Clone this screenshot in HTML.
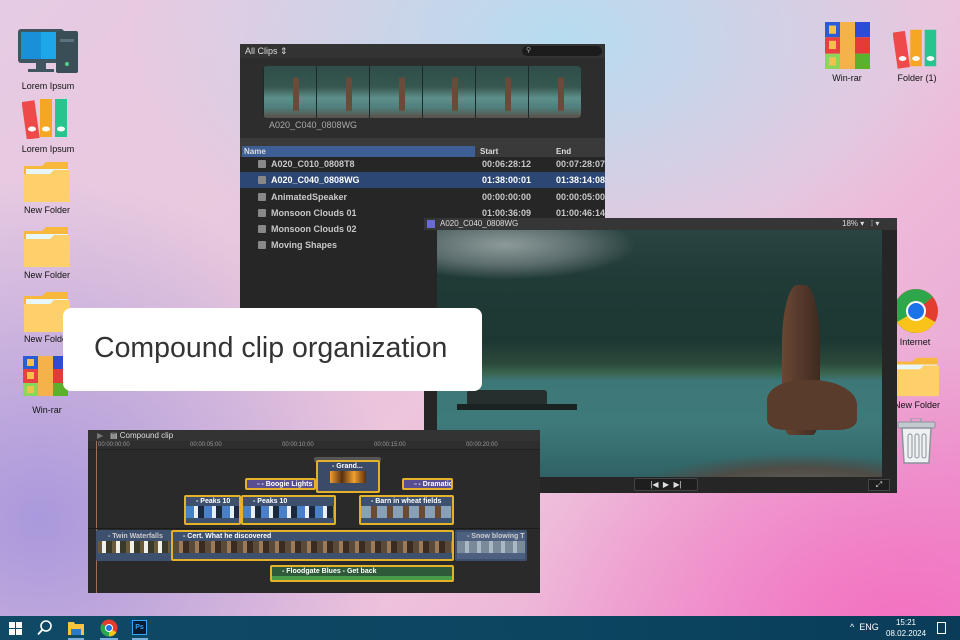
<!DOCTYPE html>
<html><head><meta charset="utf-8"><style>
*{margin:0;padding:0;box-sizing:border-box}
body{width:960px;height:640px;overflow:hidden;position:relative;font-family:"Liberation Sans",sans-serif;
background:
radial-gradient(ellipse 420px 260px at 560px 40px,#b6dcf0 0%,rgba(182,220,240,0) 100%),
radial-gradient(ellipse 380px 300px at 900px 640px,#f46fc0 0%,rgba(244,111,192,0) 100%),
radial-gradient(ellipse 360px 340px at 40px 520px,#a998dc 0%,rgba(169,152,220,0) 100%),
linear-gradient(135deg,#e6cbe4 0%,#e9c8dc 35%,#efc3dc 60%,#e99ad0 100%);}
.abs{position:absolute}
.lbl{position:absolute;font-size:9px;color:#111;text-align:center;width:80px}
.win{position:absolute;background:#2b2b2b}
.row{position:absolute;left:0;width:365px;height:16px;font-size:9px;font-weight:bold;color:#c8c8c8;line-height:16px}
.row span{position:absolute}
.ic{position:absolute;left:18px;top:4px;width:8px;height:8px;background:#888;border-radius:1px}
.clip{position:absolute;border:2px solid #e3b22a;border-radius:2px;background:#3d506e;font-size:7px;color:#fff;font-weight:bold;padding-left:10px;line-height:9px;overflow:hidden;white-space:nowrap}
.thumbs{position:absolute;left:0;right:0;top:9px;height:12px}
</style></head><body>

<svg class="abs" style="left:16px;top:27px" width="64" height="50" viewBox="0 0 64 50">
<rect x="2" y="2" width="46" height="34" rx="3" fill="#3f5560"/><rect x="5" y="5" width="40" height="27" fill="#1da7e8"/><rect x="5" y="5" width="20" height="27" fill="#1a90d8"/>
<rect x="20" y="36" width="10" height="6" fill="#3f5560"/><rect x="12" y="42" width="26" height="3" fill="#3f5560"/>
<rect x="40" y="4" width="22" height="42" rx="2" fill="#3a4e58"/><rect x="44" y="12" width="14" height="3" fill="#5b7380"/><circle cx="51" cy="37" r="2" fill="#4fd08a"/></svg>
<div class="lbl" style="left:8px;top:81px">Lorem Ipsum</div>
<svg class="abs" style="left:22px;top:97px" width="50" height="42" viewBox="0 0 50 42">
<rect x="2" y="4" width="13" height="38" fill="#ef4a4a" transform="rotate(-8 8 22)"/><rect x="18" y="2" width="12" height="38" fill="#f5a623"/><rect x="33" y="2" width="12" height="38" fill="#27c48d"/>
<ellipse cx="10" cy="32" rx="4" ry="2.5" fill="#fff"/><ellipse cx="24" cy="32" rx="4" ry="2.5" fill="#fff"/><ellipse cx="39" cy="32" rx="4" ry="2.5" fill="#fff"/></svg>
<div class="lbl" style="left:8px;top:144px">Lorem Ipsum</div>
<svg class="abs" style="left:24px;top:160px" width="46" height="42" viewBox="0 0 46 42"><path d="M0 6h18l4-4h22v38H0z" fill="#f8b83c"/><rect x="2" y="9" width="42" height="6" fill="#e6f6fb"/><path d="M0 14h26l4-4h16v32H0z" fill="#fdd06a"/></svg>
<div class="lbl" style="left:7px;top:205px">New Folder</div>
<svg class="abs" style="left:24px;top:225px" width="46" height="42" viewBox="0 0 46 42"><path d="M0 6h18l4-4h22v38H0z" fill="#f8b83c"/><rect x="2" y="9" width="42" height="6" fill="#e6f6fb"/><path d="M0 14h26l4-4h16v32H0z" fill="#fdd06a"/></svg>
<div class="lbl" style="left:7px;top:270px">New Folder</div>
<svg class="abs" style="left:24px;top:290px" width="46" height="42" viewBox="0 0 46 42"><path d="M0 6h18l4-4h22v38H0z" fill="#f8b83c"/><rect x="2" y="9" width="42" height="6" fill="#e6f6fb"/><path d="M0 14h26l4-4h16v32H0z" fill="#fdd06a"/></svg>
<div class="lbl" style="left:7px;top:334px">New Folder</div>
<svg class="abs" style="left:23px;top:356px" width="45" height="40" viewBox="0 0 45 40"><rect width="15" height="13" fill="#2d5bd6"/><rect x="30" width="15" height="13" fill="#2d4bd6"/><rect y="13" width="15" height="14" fill="#e84040"/><rect x="30" y="13" width="15" height="14" fill="#e43a3a"/><rect y="27" width="15" height="13" fill="#8fd45a"/><rect x="30" y="27" width="15" height="13" fill="#5cb02c"/><rect x="15" width="15" height="40" fill="#f5b24a"/><rect x="4" y="3" width="7" height="7" fill="#f5c04a"/><rect x="4" y="16" width="7" height="7" fill="#f5c04a"/><rect x="4" y="30" width="7" height="7" fill="#f5c04a"/></svg>
<div class="lbl" style="left:7px;top:405px">Win-rar</div>

<svg class="abs" style="left:825px;top:22px" width="45" height="47" viewBox="0 0 45 40" preserveAspectRatio="none"><rect width="15" height="13" fill="#2d5bd6"/><rect x="30" width="15" height="13" fill="#2d4bd6"/><rect y="13" width="15" height="14" fill="#e84040"/><rect x="30" y="13" width="15" height="14" fill="#e43a3a"/><rect y="27" width="15" height="13" fill="#8fd45a"/><rect x="30" y="27" width="15" height="13" fill="#5cb02c"/><rect x="15" width="15" height="40" fill="#f5b24a"/><rect x="4" y="3" width="7" height="7" fill="#f5c04a"/><rect x="4" y="16" width="7" height="7" fill="#f5c04a"/><rect x="4" y="30" width="7" height="7" fill="#f5c04a"/></svg>
<div class="lbl" style="left:807px;top:73px">Win-rar</div>
<svg class="abs" style="left:893px;top:27px" width="48" height="42" viewBox="0 0 50 42">
<rect x="2" y="4" width="13" height="38" fill="#ef4a4a" transform="rotate(-8 8 22)"/><rect x="18" y="2" width="12" height="38" fill="#f5a623"/><rect x="33" y="2" width="12" height="38" fill="#27c48d"/>
<ellipse cx="10" cy="32" rx="4" ry="2.5" fill="#fff"/><ellipse cx="24" cy="32" rx="4" ry="2.5" fill="#fff"/><ellipse cx="39" cy="32" rx="4" ry="2.5" fill="#fff"/></svg>
<div class="lbl" style="left:877px;top:73px">Folder (1)</div>
<svg class="abs" style="left:893px;top:288px" width="46" height="46" viewBox="-23 -23 46 46">
<circle r="22" fill="#e33d30"/><path d="M0 0L-19 -11A22 22 0 0 1 19 -11Z" fill="#2ea64c" transform="rotate(-10)"/><path d="M0 0L-19 -11A22 22 0 0 0 0 22Z" fill="#2ea64c"/><path d="M0 0L0 22A22 22 0 0 0 19 11Z" fill="#f9c31a"/><path d="M0 0L-19 11A22 22 0 0 0 19 11Z" fill="#f9c31a"/>
<circle r="10" fill="#fff"/><circle r="8" fill="#1a73e8"/></svg>
<div class="lbl" style="left:875px;top:337px">Internet</div>
<svg class="abs" style="left:895px;top:355px" width="44" height="42" viewBox="0 0 46 42"><path d="M0 6h18l4-4h22v38H0z" fill="#f8b83c"/><rect x="2" y="9" width="42" height="6" fill="#e6f6fb"/><path d="M0 14h26l4-4h16v32H0z" fill="#fdd06a"/></svg>
<div class="lbl" style="left:877px;top:400px">New Folder</div>
<svg class="abs" style="left:897px;top:418px" width="40" height="46" viewBox="0 0 40 46"><rect x="14" y="0" width="10" height="4" fill="none" stroke="#9aa4ad" stroke-width="1.5"/><rect x="1" y="4" width="37" height="6" rx="1" fill="#c3c9cf" stroke="#8c949c"/><path d="M5 10h29l-2 35H7z" fill="#eef0f2" stroke="#8c949c" stroke-width="1.5"/><rect x="11" y="16" width="4" height="24" rx="2" fill="none" stroke="#8c949c"/><rect x="18" y="16" width="4" height="24" rx="2" fill="none" stroke="#8c949c"/><rect x="25" y="16" width="4" height="24" rx="2" fill="none" stroke="#8c949c"/></svg>

<div class="win" style="left:240px;top:44px;width:365px;height:266px;background:#262626">
 <div class="abs" style="left:0;top:0;width:365px;height:14px;background:#333;font-size:9px;color:#ddd;line-height:14px;padding-left:5px">All Clips ⇕</div>
 <div class="abs" style="left:282px;top:2px;width:80px;height:10px;background:#1c1c1c;border-radius:5px;font-size:7px;color:#aaa;padding-left:4px;line-height:10px">⚲</div>
 <div class="abs" style="left:0;top:14px;width:365px;height:88px;background:#2d2d2d"></div>
 <div class="abs" style="left:23px;top:22px;width:318px;height:52px;border-radius:4px;overflow:hidden;background:linear-gradient(#2f4d4a 0%,#36574f 40%,#5f8f8a 62%,#4f7f7c 80%,#5a5048 100%)">
  <div class="abs" style="left:0;top:0;width:318px;height:52px;background:repeating-linear-gradient(90deg,rgba(0,0,0,0) 0 30px,#6a4a38 30px 36px,rgba(0,0,0,0) 36px 53px);-webkit-mask:linear-gradient(transparent 20%,#000 25%,#000 85%,transparent 88%)"></div>
  <div class="abs" style="left:0;top:0;width:318px;height:52px;background:repeating-linear-gradient(90deg,#1a2a2a 0 1px,transparent 1px 53px)"></div>
 </div>
 <div class="abs" style="left:29px;top:76px;font-size:9px;color:#aaa">A020_C040_0808WG</div>
 <div class="abs" style="left:0;top:94px;width:365px;height:8px;background:#3a3a3a"></div>
 <div class="abs" style="left:0;top:102px;width:365px;height:11px;background:#3a3a3a;font-size:8px;font-weight:bold;color:#ddd;line-height:11px">
  <div class="abs" style="left:2px;top:0;width:233px;height:11px;background:#3d5f95;padding-left:2px">Name</div>
  <span class="abs" style="left:240px">Start</span><span class="abs" style="left:316px">End</span></div>
 <div class="row" style="top:112px"><div class="ic"></div><span style="left:31px">A020_C010_0808T8</span><span style="left:242px">00:06:28:12</span><span style="left:316px">00:07:28:07</span></div>
 <div class="row" style="top:128px;background:#2c4774;color:#fff"><div class="ic"></div><span style="left:31px">A020_C040_0808WG</span><span style="left:242px">01:38:00:01</span><span style="left:316px">01:38:14:08</span></div>
 <div class="row" style="top:145px"><div class="ic"></div><span style="left:31px">AnimatedSpeaker</span><span style="left:242px">00:00:00:00</span><span style="left:316px">00:00:05:00</span></div>
 <div class="row" style="top:161px"><div class="ic"></div><span style="left:31px">Monsoon Clouds 01</span><span style="left:242px">01:00:36:09</span><span style="left:316px">01:00:46:14</span></div>
 <div class="row" style="top:177px"><div class="ic"></div><span style="left:31px">Monsoon Clouds 02</span></div>
 <div class="row" style="top:193px"><div class="ic"></div><span style="left:31px">Moving Shapes</span></div>
</div>

<div class="win" style="left:424px;top:218px;width:473px;height:275px;background:#262626">
 <div class="abs" style="left:0;top:0;width:473px;height:12px;background:#363636;font-size:8px;color:#ddd;line-height:12px">
  <span class="abs" style="left:3px;top:2px;width:8px;height:8px;background:#6a6ad8"></span><span class="abs" style="left:16px">A020_C040_0808WG</span>
  <span class="abs" style="left:418px">18% ▾ &nbsp; ⁞ ▾</span></div>
 <div class="abs" style="left:13px;top:12px;width:445px;height:247px;overflow:hidden;background:linear-gradient(180deg,#2a4443 0%,#203a37 20%,#1d3733 45%,#2b4a3a 54%,#3a6550 58%,#3d7777 61%,#3f7a7b 78%,#2f6264 100%)">
  <div class="abs" style="left:-20px;top:-20px;width:220px;height:70px;background:radial-gradient(ellipse at 40% 50%,#8d9a9a 0%,#5d6e6e 40%,rgba(60,80,80,0) 70%)"></div>
  <div class="abs" style="left:30px;top:160px;width:80px;height:16px;background:#25302e;border-radius:3px"></div>
  <div class="abs" style="left:20px;top:174px;width:120px;height:6px;background:#1a2222"></div>
  <div class="abs" style="left:200px;top:200px;width:270px;height:60px;background:radial-gradient(ellipse 60% 60% at 60% 100%,#6a665f,#4f4b45 60%,rgba(60,60,60,0) 100%)"></div>
  <div class="abs" style="left:345px;top:55px;width:38px;height:150px;border-radius:40% 40% 20% 20%;background:linear-gradient(90deg,#6b4734,#3e2a20)"></div>
  <div class="abs" style="left:330px;top:150px;width:90px;height:50px;border-radius:40% 50% 20% 20%;background:#5a3c2c"></div>
 </div>
 <div class="abs" style="left:210px;top:260px;width:64px;height:13px;background:#1e1e1e;border:1px solid #444;border-radius:2px;font-size:8px;color:#ddd;text-align:center;line-height:11px">|◀ &nbsp;▶ &nbsp;▶|</div>
 <div class="abs" style="left:444px;top:261px;width:22px;height:12px;background:#1e1e1e;border:1px solid #444;font-size:8px;color:#ddd;text-align:center;line-height:10px">⤢</div>
</div>

<div class="abs" style="left:63px;top:308px;width:419px;height:83px;background:#fff;border-radius:8px;font-size:28.5px;color:#333;line-height:80px;padding-left:31px">Compound clip organization</div>

<div class="win" style="left:88px;top:430px;width:452px;height:163px;background:#2a2a2a">
 <div class="abs" style="left:0;top:0;width:452px;height:11px;background:#333;font-size:8px;color:#ddd;line-height:11px"><span class="abs" style="left:9px;color:#777">▶</span><span class="abs" style="left:22px">▤ Compound clip</span></div>
 <div class="abs" style="left:0;top:11px;width:452px;height:9px;background:#2e2e2e;font-size:6px;color:#999;line-height:9px;border-bottom:1px solid #222">
  <span class="abs" style="left:10px">00:00:00:00</span><span class="abs" style="left:102px">00:00:05:00</span><span class="abs" style="left:194px">00:00:10:00</span><span class="abs" style="left:286px">00:00:15:00</span><span class="abs" style="left:378px">00:00:20:00</span></div>
 <div class="abs" style="left:8px;top:11px;width:1px;height:152px;background:#a07050"></div>
 <div class="abs" style="left:0;top:98px;width:452px;height:1px;background:#1c1c1c"></div>
 <div class="abs" style="left:226px;top:27px;width:67px;height:5px;background:#555;border-radius:2px"></div>
 <div class="clip" style="left:228px;top:30px;width:64px;height:33px;background:#3b4a66;padding-left:14px">- Grand...<div class="thumbs" style="left:12px;right:12px;background:linear-gradient(90deg,#f0a030,#5a3010,#f0a030,#5a3010)"></div></div>
 <div class="clip" style="left:157px;top:48px;width:71px;height:12px;background:#5a4e92">▫ - Boogie Lights</div>
 <div class="clip" style="left:314px;top:48px;width:51px;height:12px;background:#5a4e92">▫ - Dramatic c...</div>
 <div class="clip" style="left:96px;top:65px;width:57px;height:30px">- Peaks 10<div class="thumbs" style="background:repeating-linear-gradient(90deg,#4a80c8 0 8px,#e8eef4 8px 12px,#1a2a3a 12px 18px)"></div></div>
 <div class="clip" style="left:153px;top:65px;width:95px;height:30px">- Peaks 10<div class="thumbs" style="background:repeating-linear-gradient(90deg,#4a80c8 0 8px,#e8eef4 8px 12px,#1a2a3a 12px 18px)"></div></div>
 <div class="clip" style="left:271px;top:65px;width:95px;height:30px">- Barn in wheat fields<div class="thumbs" style="background:repeating-linear-gradient(90deg,#8aa0b8 0 10px,#6a4a30 10px 16px)"></div></div>
 <div class="clip" style="left:8px;top:100px;width:76px;height:31px;border-color:#3d506e;color:#ccc">- Twin Waterfalls<div class="thumbs" style="background:repeating-linear-gradient(90deg,#6a5a3a 0 4px,#f0f0e8 4px 8px,#3a3a2a 8px 14px)"></div></div>
 <div class="clip" style="left:83px;top:100px;width:283px;height:31px">- Cert. What he discovered<div class="thumbs" style="background:repeating-linear-gradient(90deg,#5a4a3a 0 6px,#9a7a5a 6px 10px,#3a2a20 10px 16px)"></div></div>
 <div class="clip" style="left:367px;top:100px;width:72px;height:31px;border-color:#3d506e;background:#4d6080;color:#ccc">- Snow blowing Thru...<div class="thumbs" style="background:repeating-linear-gradient(90deg,#7a8a98 0 8px,#aab8c4 8px 12px)"></div></div>
 <div class="clip" style="left:182px;top:135px;width:184px;height:17px;background:#2e5a3a">- Floodgate Blues - Get back<div class="abs" style="left:0;right:0;top:9px;height:6px;background:#4a9a48"></div></div>
</div>

<div class="abs" style="left:0;top:616px;width:960px;height:24px;background:linear-gradient(90deg,#0e4a66,#0b4560 60%,#0a3c58)">
 <svg class="abs" style="left:9px;top:6px" width="13" height="13" viewBox="0 0 13 13" fill="#fff"><rect width="6" height="6"/><rect x="7" width="6" height="6"/><rect y="7" width="6" height="6"/><rect x="7" y="7" width="6" height="6"/></svg>
 <svg class="abs" style="left:37px;top:4px" width="16" height="16" viewBox="0 0 16 16"><circle cx="9" cy="6" r="5" fill="none" stroke="#fff" stroke-width="1.6"/><path d="M5.5 9.5L1 14.5" stroke="#fff" stroke-width="1.8"/></svg>
 <svg class="abs" style="left:68px;top:4px" width="16" height="16" viewBox="0 0 16 16"><path d="M0 2h6l1 2h9v11H0z" fill="#f8c43c"/><rect x="3" y="9" width="10" height="6" fill="#2a7ac8"/></svg>
 <div class="abs" style="left:68px;top:22px;width:16px;height:2px;background:#7ab0d8"></div>
 <svg class="abs" style="left:100px;top:3px" width="18" height="18" viewBox="-9 -9 18 18"><circle r="8.5" fill="#e33d30"/><path d="M0 0L-7.4 -4.2A8.5 8.5 0 0 0 0 8.5Z" fill="#2ea64c"/><path d="M0 0L0 8.5A8.5 8.5 0 0 0 7.4 4.2Z" fill="#f9c31a"/><circle r="4" fill="#fff"/><circle r="3" fill="#1a73e8"/></svg>
 <div class="abs" style="left:100px;top:22px;width:18px;height:2px;background:#7ab0d8"></div>
 <div class="abs" style="left:132px;top:4px;width:15px;height:15px;background:#0a1a30;border:1px solid #31a8ff;font-size:7px;color:#31a8ff;font-weight:bold;line-height:13px;text-align:center">Ps</div>
 <div class="abs" style="left:132px;top:22px;width:16px;height:2px;background:#7ab0d8"></div>
 <div class="abs" style="left:850px;top:6px;font-size:9px;color:#fff">^ &nbsp;ENG</div>
 <div class="abs" style="left:886px;top:1px;font-size:8px;color:#fff;text-align:center;line-height:11px;width:40px">15:21<br>08.02.2024</div>
 <div class="abs" style="left:937px;top:6px;width:9px;height:12px;border:1px solid #fff"></div>
</div>
</body></html>
